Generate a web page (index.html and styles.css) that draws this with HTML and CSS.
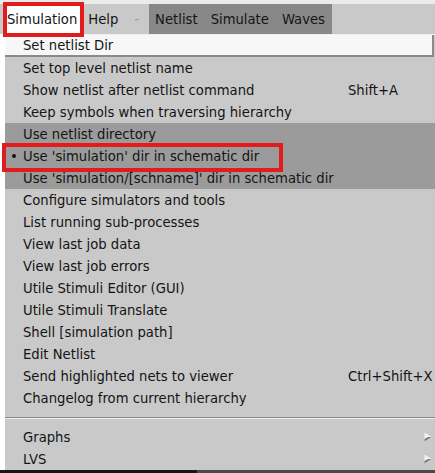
FILE: index.html
```html
<!DOCTYPE html>
<html>
<head>
<meta charset="utf-8">
<link rel="stylesheet" href="styles.css">
</head>
<body>
<div class="screen">
  <div class="topstrip"></div>
  <div class="menubar">
    <span class="mb-item mb-active">Simulation</span>
    <span class="mb-item mb-help">Help</span>
    <span class="mb-item mb-dim">-</span>
    <div class="mb-group">
      <span class="mb-item">Netlist</span>
      <span class="mb-item">Simulate</span>
      <span class="mb-item">Waves</span>
    </div>
  </div>
  <div class="main">
    <div class="gutter"></div>
    <div class="menu">
      <div class="row active"><span class="ind"></span><span class="lbl">Set netlist Dir</span><span class="acc"></span></div>
      <div class="row"><span class="ind"></span><span class="lbl">Set top level netlist name</span><span class="acc"></span></div>
      <div class="row"><span class="ind"></span><span class="lbl">Show netlist after netlist command</span><span class="acc">Shift+A</span></div>
      <div class="row"><span class="ind"></span><span class="lbl">Keep symbols when traversing hierarchy</span><span class="acc"></span></div>
      <div class="row radio"><span class="ind"></span><span class="lbl">Use netlist directory</span><span class="acc"></span></div>
      <div class="row radio"><span class="ind"><span class="dot"></span></span><span class="lbl">Use 'simulation' dir in schematic dir</span><span class="acc"></span></div>
      <div class="row radio"><span class="ind"></span><span class="lbl">Use 'simulation/[schname]' dir in schematic dir</span><span class="acc"></span></div>
      <div class="row"><span class="ind"></span><span class="lbl">Configure simulators and tools</span><span class="acc"></span></div>
      <div class="row"><span class="ind"></span><span class="lbl">List running sub-processes</span><span class="acc"></span></div>
      <div class="row"><span class="ind"></span><span class="lbl">View last job data</span><span class="acc"></span></div>
      <div class="row"><span class="ind"></span><span class="lbl">View last job errors</span><span class="acc"></span></div>
      <div class="row"><span class="ind"></span><span class="lbl">Utile Stimuli Editor (GUI)</span><span class="acc"></span></div>
      <div class="row"><span class="ind"></span><span class="lbl">Utile Stimuli Translate</span><span class="acc"></span></div>
      <div class="row"><span class="ind"></span><span class="lbl">Shell [simulation path]</span><span class="acc"></span></div>
      <div class="row"><span class="ind"></span><span class="lbl">Edit Netlist</span><span class="acc"></span></div>
      <div class="row"><span class="ind"></span><span class="lbl">Send highlighted nets to viewer</span><span class="acc">Ctrl+Shift+X</span></div>
      <div class="row"><span class="ind"></span><span class="lbl">Changelog from current hierarchy</span><span class="acc"></span></div>
      <div class="sep"></div>
      <div class="row"><span class="ind"></span><span class="lbl">Graphs</span><span class="acc arrow"><svg width="8" height="10" viewBox="0 0 8 10"><polygon points="0.5,0.5 7.5,5 0.5,9.5" fill="#f4f4f4"/><polygon points="7.5,5 0.5,9.5 0.5,7 4,5" fill="#7a7a7a"/></svg></span></div>
      <div class="row"><span class="ind"></span><span class="lbl">LVS</span><span class="acc arrow"><svg width="8" height="10" viewBox="0 0 8 10"><polygon points="0.5,0.5 7.5,5 0.5,9.5" fill="#f4f4f4"/><polygon points="7.5,5 0.5,9.5 0.5,7 4,5" fill="#7a7a7a"/></svg></span></div>
    </div>
  </div>
  <div class="bottom"><div class="b-dark"></div><div class="b-grey"></div></div>
  <div class="mark mark-a"></div>
  <div class="mark mark-b"></div>
</div>
</body>
</html>
```

FILE: styles.css
```css
html, body {
  margin: 0;
  padding: 0;
  background: #ffffff;
}
.screen {
  position: relative;
  width: 435px;
  height: 473px;
  overflow: hidden;
  font-family: "DejaVu Sans", sans-serif;
  font-size: 13.2px;
  color: #141414;
  display: flex;
  flex-direction: column;
}
.topstrip {
  height: 4px;
  background: #ebebeb;
  flex: none;
}
.menubar {
  height: 30px;
  flex: none;
  display: flex;
  align-items: stretch;
  background: #c9c9c9;
  padding-left: 3px;
}
.mb-item {
  display: flex;
  align-items: center;
  padding: 0 6px;
}
.mb-active {
  background: #ffffff;
  padding: 0 6px 0 4px;
}
.mb-help {
  padding: 0 8px 0 5px;
}
.mb-dim {
  color: #9a9a9a;
  padding: 0 10px 0 8px;
}
.mb-group {
  display: flex;
  align-items: stretch;
  background: #888888;
  padding-right: 1px;
}
.mb-group .mb-item:nth-child(2) {
  padding-left: 7px;
}
.mb-group .mb-item:nth-child(3) {
  padding-left: 7px;
}
.main {
  flex: 1;
  display: flex;
}
.gutter {
  width: 5px;
  flex: none;
  background: #ffffff;
}
.menu {
  flex: 1;
  background: #c9c9c9;
  border-top: 1px solid #f0f0f0;
  display: flex;
  flex-direction: column;
}
.row {
  height: 22px;
  flex: none;
  display: grid;
  grid-template-columns: 18px 325px 1fr;
  align-items: center;
  box-sizing: border-box;
  white-space: nowrap;
}
.row.active {
  background: #f7f7f7;
  border-right: 2px solid #8a8a8a;
  border-bottom: 2px solid #8a8a8a;
  margin-right: 1px;
}
.row.radio {
  background: #9b9b9b;
}
.ind {
  display: flex;
  justify-content: center;
  align-items: center;
}
.dot {
  width: 4px;
  height: 4px;
  border-radius: 50%;
  background: #111;
}
.acc.arrow {
  display: flex;
  justify-content: flex-end;
  padding-right: 3px;
}
.acc.arrow svg {
  display: block;
}
.sep {
  height: 17px;
  flex: none;
  display: flex;
  flex-direction: column;
  justify-content: center;
}
.sep::before {
  content: "";
  display: block;
  height: 1px;
  background: #8a8a8a;
  border-bottom: 1px solid #efefef;
}
.bottom {
  height: 3px;
  flex: none;
  display: flex;
}
.b-dark {
  width: 197px;
  background: #161616;
}
.b-grey {
  flex: 1;
  background: #4a4a4a;
}
.mark {
  position: absolute;
  box-sizing: border-box;
  border: 4px solid #e21c1c;
}
.mark-a {
  left: 3px;
  top: 2px;
  width: 81px;
  height: 35px;
}
.mark-b {
  left: 2px;
  top: 143px;
  width: 281px;
  height: 29px;
}
```
